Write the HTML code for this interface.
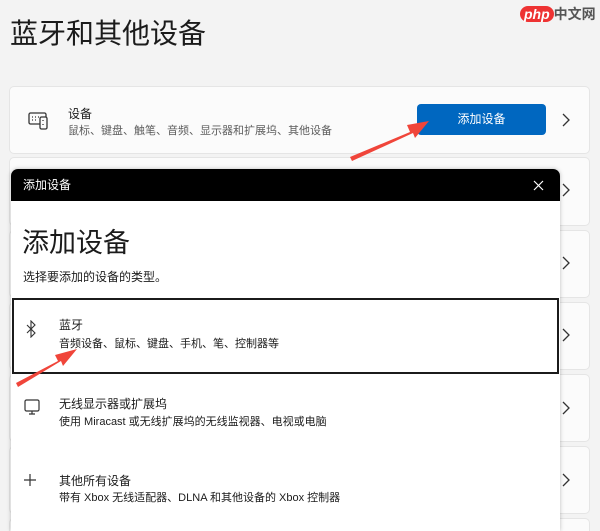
<!DOCTYPE html>
<html><head><meta charset="utf-8"><style>
*{margin:0;padding:0;box-sizing:border-box}
html,body{width:600px;height:531px;overflow:hidden}
body{background:#f3f3f3;font-family:"Liberation Sans","Noto Sans CJK SC",sans-serif;color:#1b1b1b;position:relative}
.a{position:absolute}
.card{position:absolute;left:9px;width:581px;background:#fbfbfb;border:1px solid #e5e5e5;border-radius:5px}
</style></head><body>
<div class="a" style="left:10px;top:12px;font-size:28px;color:#1b1b1b">蓝牙和其他设备</div>
<div class="a" style="left:520px;top:4px;width:80px;height:22px;font-size:14px;font-weight:bold;color:#555"><span style="background:#e33;color:#fff;border-radius:10px;padding:0 4px;font-style:italic">php</span>中文网</div>
<div class="card" style="top:86px;height:68px"></div>
<svg class="a" style="left:27px;top:110px" width="22" height="22" viewBox="0 0 22 22" fill="none" stroke="#333" stroke-width="1.3"><rect x="2" y="3" width="17" height="11" rx="1.5"/><rect x="13" y="7" width="7" height="12" rx="1.5" fill="#fbfbfb"/><path d="M5 7h1M8 7h1M11 7h1M5 10h1M8 10h1M16 10v1M16 14v1"/></svg>
<div class="a" style="left:68px;top:105px;font-size:12px">设备</div>
<div class="a" style="left:68px;top:122px;font-size:11px;color:#5d5d5d">鼠标、键盘、触笔、音频、显示器和扩展坞、其他设备</div>
<div class="a" style="left:417px;top:104px;width:129px;height:31px;background:#0067c0;border-radius:4px;color:#fff;font-size:12px;text-align:center;line-height:31px">添加设备</div>
<svg class="a" style="left:560px;top:112px" width="12" height="16"><path d="M3 2l6 6-6 6" stroke="#333" stroke-width="1.3" fill="none"/></svg>
<div class="card" style="top:157px;height:69px"></div>
<div class="card" style="top:230px;height:68px"></div>
<div class="card" style="top:302px;height:68px"></div>
<div class="card" style="top:374px;height:68px"></div>
<div class="card" style="top:446px;height:68px"></div>
<div class="card" style="top:518px;height:13px;border-bottom:none;border-radius:5px 5px 0 0"></div>
<svg class="a" style="left:560px;top:0" width="14" height="531" fill="none" stroke="#333" stroke-width="1.3"><path d="M3 184l6 6-6 6M3 257l6 6-6 6M3 329l6 6-6 6M3 402l6 6-6 6M3 474l6 6-6 6"/></svg>
<div class="a" style="left:11px;top:169px;width:549px;height:362px;background:#fff;border-radius:7px 7px 0 0;overflow:hidden;box-shadow:0 0 4px rgba(0,0,0,.25)">
 <div style="height:32px;background:#000;color:#fff;font-size:12px;line-height:32px;padding-left:12px;position:relative">添加设备
  <svg style="position:absolute;right:16px;top:11px" width="11" height="11"><path d="M1 1l9 9M10 1l-9 9" stroke="#fff" stroke-width="1.2"/></svg></div>
 <div class="a" style="left:11px;top:52px;font-size:27px;color:#1b1b1b">添加设备</div>
 <div class="a" style="left:12px;top:99px;font-size:12px">选择要添加的设备的类型。</div>
 <div class="a" style="left:1px;top:129px;width:547px;height:76px;border:2px solid #1b1b1b"></div>
 <svg class="a" style="left:14px;top:151px" width="12" height="18" fill="none" stroke="#333" stroke-width="1.1"><path d="M2 5l8 8-4 4V1l4 4-8 8"/></svg>
 <div class="a" style="left:48px;top:147px;font-size:12px">蓝牙</div>
 <div class="a" style="left:48px;top:166px;font-size:11px">音频设备、鼠标、键盘、手机、笔、控制器等</div>
 <svg class="a" style="left:12px;top:229px" width="18" height="18" fill="none" stroke="#333" stroke-width="1.2"><rect x="2" y="2" width="14" height="11" rx="1.5"/><path d="M9 13v3M6 16h6"/></svg>
 <div class="a" style="left:48px;top:226px;font-size:12px">无线显示器或扩展坞</div>
 <div class="a" style="left:48px;top:244px;font-size:11px">使用 Miracast 或无线扩展坞的无线监视器、电视或电脑</div>
 <svg class="a" style="left:12px;top:304px" width="14" height="14"><path d="M7 1v12M1 7h12" stroke="#333" stroke-width="1.2"/></svg>
 <div class="a" style="left:48px;top:303px;font-size:12px">其他所有设备</div>
 <div class="a" style="left:48px;top:320px;font-size:11px">带有 Xbox 无线适配器、DLNA 和其他设备的 Xbox 控制器</div>
</div>
<svg class="a" style="left:0;top:0" width="600" height="531"><g fill="#f0453a"><path d="M350 157l60-25-3-7 22-4-14 17-2-5-61 28z"/><path d="M16 383l42-22-3-6 22-6-14 17-2-5-43 26z"/></g></svg>
</body></html>
